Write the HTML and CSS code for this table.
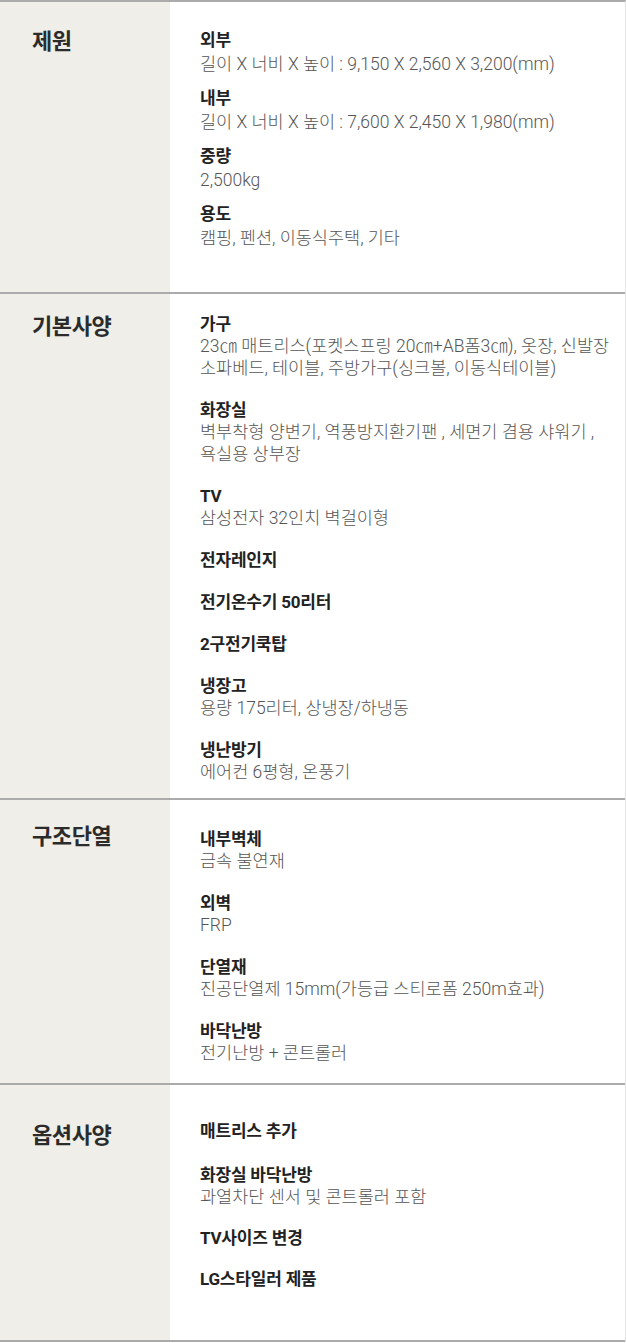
FILE: index.html
```html
<!DOCTYPE html>
<html lang="ko">
<head>
  <meta charset="UTF-8" />
  <meta name="viewport" content="width=device-width, initial-scale=1" />
  <title>캠핑카 사양</title>
  <link rel="stylesheet" href="styles.css">
</head>
<body>
  <div class="spec-table">

    <!-- 제원 -->
    <div class="spec-row row-size">
      <div class="spec-head">제원</div>
      <div class="spec-body">
        <div class="item">
          <div class="item-title">외부</div>
          <div class="item-desc">길이 X 너비 X 높이 : 9,150 X 2,560 X 3,200(mm)</div>
        </div>
        <div class="item">
          <div class="item-title">내부</div>
          <div class="item-desc">길이 X 너비 X 높이 : 7,600 X 2,450 X 1,980(mm)</div>
        </div>
        <div class="item">
          <div class="item-title">중량</div>
          <div class="item-desc">2,500kg</div>
        </div>
        <div class="item">
          <div class="item-title">용도</div>
          <div class="item-desc">캠핑, 펜션, 이동식주택, 기타</div>
        </div>
      </div>
    </div>

    <!-- 기본사양 -->
    <div class="spec-row row-basic">
      <div class="spec-head">기본사양</div>
      <div class="spec-body">
        <div class="item">
          <div class="item-title">가구</div>
          <div class="item-desc">23㎝ 매트리스(포켓스프링 20㎝+AB폼3㎝), 옷장, 신발장<br>소파베드, 테이블, 주방가구(싱크볼, 이동식테이블)</div>
        </div>
        <div class="item">
          <div class="item-title">화장실</div>
          <div class="item-desc">벽부착형 양변기, 역풍방지환기팬 , 세면기 겸용 샤워기 ,<br>욕실용 상부장</div>
        </div>
        <div class="item">
          <div class="item-title">TV</div>
          <div class="item-desc">삼성전자 32인치 벽걸이형</div>
        </div>
        <div class="item">
          <div class="item-title">전자레인지</div>
        </div>
        <div class="item">
          <div class="item-title">전기온수기 50리터</div>
        </div>
        <div class="item">
          <div class="item-title">2구전기쿡탑</div>
        </div>
        <div class="item">
          <div class="item-title">냉장고</div>
          <div class="item-desc">용량 175리터, 상냉장/하냉동</div>
        </div>
        <div class="item">
          <div class="item-title">냉난방기</div>
          <div class="item-desc">에어컨 6평형, 온풍기</div>
        </div>
      </div>
    </div>

    <!-- 구조단열 -->
    <div class="spec-row row-struct">
      <div class="spec-head">구조단열</div>
      <div class="spec-body">
        <div class="item">
          <div class="item-title">내부벽체</div>
          <div class="item-desc">금속 불연재</div>
        </div>
        <div class="item">
          <div class="item-title">외벽</div>
          <div class="item-desc">FRP</div>
        </div>
        <div class="item">
          <div class="item-title">단열재</div>
          <div class="item-desc">진공단열제 15mm(가등급 스티로폼 250m효과)</div>
        </div>
        <div class="item">
          <div class="item-title">바닥난방</div>
          <div class="item-desc">전기난방 + 콘트롤러</div>
        </div>
      </div>
    </div>

    <!-- 옵션사양 -->
    <div class="spec-row row-option">
      <div class="spec-head">옵션사양</div>
      <div class="spec-body">
        <div class="item">
          <div class="item-title">매트리스 추가</div>
        </div>
        <div class="item">
          <div class="item-title">화장실 바닥난방</div>
          <div class="item-desc">과열차단 센서 및 콘트롤러 포함</div>
        </div>
        <div class="item">
          <div class="item-title">TV사이즈 변경</div>
        </div>
        <div class="item">
          <div class="item-title">LG스타일러 제품</div>
        </div>
      </div>
    </div>

  </div>
</body>
</html>
```

FILE: styles.css
```css
/* page reset */
body {
  margin: 0;
  background-color: #ffffff;
  font-family: Roboto, "Noto Sans CJK KR", sans-serif;
  color: #333333;
}

/* whole spec table */
.spec-table {
  width: 626px;
  border-top: 2px solid #ababab;
  border-right: 1px solid #e4e4e4;
  box-sizing: border-box;
}

/* one section: label column + content column */
.spec-row {
  display: grid;
  grid-template-columns: 170px 1fr;
  border-bottom: 2px solid #ababab;
}

/* left beige label */
.spec-head {
  background-color: #efeee8;
  padding-left: 32px;
  font-size: 22px;
  font-weight: bold;
  line-height: 32px;
  color: #2b2b2b;
  letter-spacing: -0.4px;
}

/* right content */
.spec-body {
  padding-left: 30px;
  display: flex;
  flex-direction: column;
  gap: 20px;
}

.item-title {
  font-size: 17px;
  font-weight: bold;
  line-height: 22px;
  color: #222222;
  letter-spacing: -0.2px;
}

.item-desc {
  font-size: 17.5px;
  font-weight: 300;
  line-height: 22px;
  color: #555555;
  white-space: nowrap;
}

/* section spacing */
.row-size .spec-head { padding-top: 24px; }
.row-size .spec-body { padding: 26px 0 42px 30px; gap: 10px; }
.row-size .item-title,
.row-size .item-desc { line-height: 24px; }

.row-basic .spec-head { padding-top: 17px; }
.row-basic .spec-body { padding: 19px 0 15px 30px; }

.row-struct .spec-head { padding-top: 21px; }
.row-struct .spec-body { padding: 28px 0 19px 30px; }

.row-option .spec-head { padding-top: 35px; }
.row-option .spec-body { padding: 35px 0 50px 30px; gap: 19px; }
.row-option .item:first-child { margin-bottom: 3px; }
```
